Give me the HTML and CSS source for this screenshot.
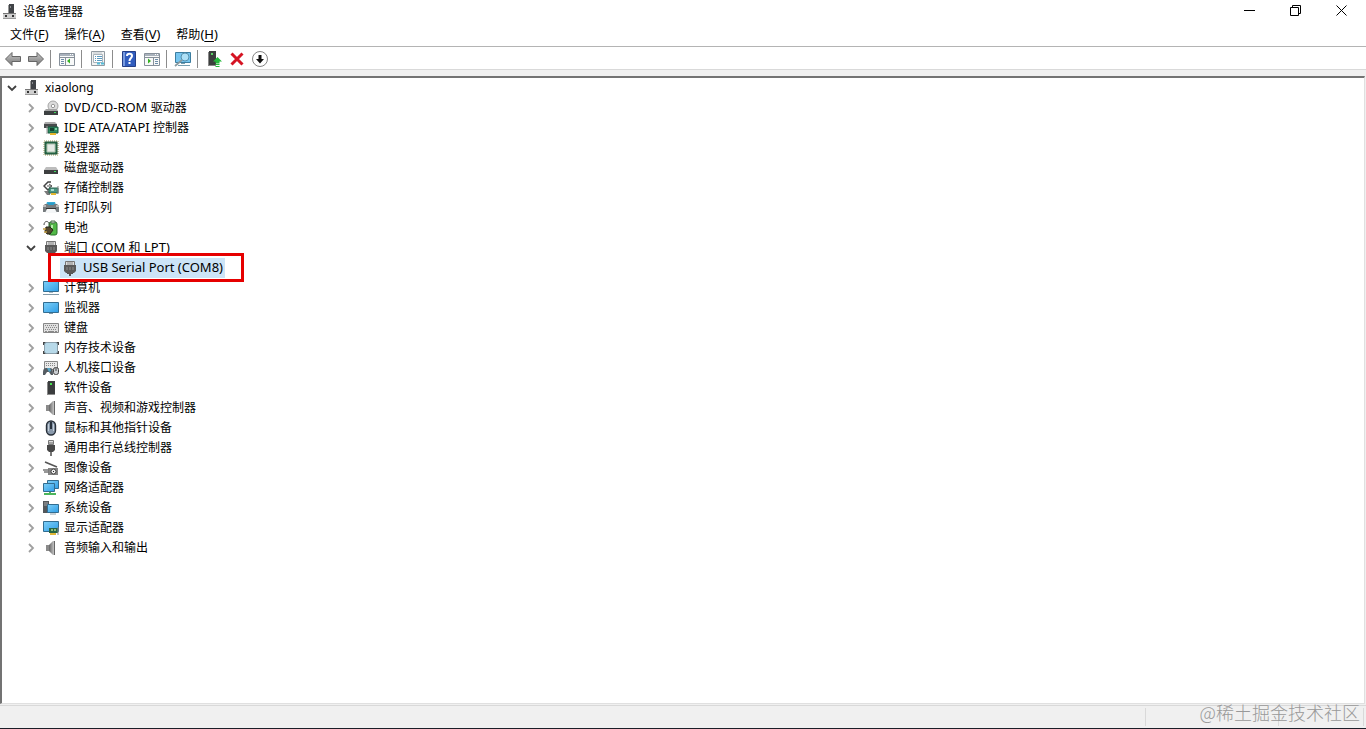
FILE: index.html
```html
<!DOCTYPE html>
<html lang="zh-CN">
<head>
    <meta charset="UTF-8">
    <meta name="viewport" content="width=device-width, initial-scale=1.0">
    <title>设备管理器</title>
    <link rel="stylesheet" href="styles.css">
</head>
<body>
    <!-- Icon sprite -->
    <svg class="sprite" aria-hidden="true">
        <defs>
            <linearGradient id="screen" x1="0" y1="0" x2="1" y2="1">
                <stop offset="0" stop-color="#7fd0f8"/><stop offset="1" stop-color="#2e9de6"/>
            </linearGradient>
            <linearGradient id="metal" x1="0" y1="0" x2="0" y2="1">
                <stop offset="0" stop-color="#c8c8c8"/><stop offset="1" stop-color="#777"/>
            </linearGradient>
            <linearGradient id="cone" x1="0" y1="0" x2="1" y2="0">
                <stop offset="0" stop-color="#666"/><stop offset="1" stop-color="#c4c4c4"/>
            </linearGradient>
        </defs>
        <symbol id="i-right" viewBox="0 0 16 16"><path d="M6 4l4 4-4 4" fill="none" stroke="#a0a0a0" stroke-width="1.8"/></symbol>
        <symbol id="i-down" viewBox="0 0 16 16"><path d="M4 6l4 4 4-4" fill="none" stroke="#404040" stroke-width="1.8"/></symbol>
        <symbol id="i-pc" viewBox="0 0 16 16">
            <path d="M7 0h5v9H7z" fill="#404347"/><path d="M6 1h1v8H6z" fill="#999"/><path d="M8 2h1v2H8z" fill="#8a8d90"/>
            <path d="M1 9h13v6H1z" fill="#cfcfcf"/><path d="M1 9h13v1H1z" fill="#777"/><path d="M1 14h13v1H1z" fill="#999"/><path d="M3 11h2v2H3zM10 11h2v2h-2z" fill="#333"/>
        </symbol>
        <symbol id="i-dvd" viewBox="0 0 16 16">
            <circle cx="10" cy="6" r="5" fill="#dcdcdc" stroke="#a5a5a5"/><circle cx="10" cy="6" r="1.7" fill="#fff" stroke="#999"/>
            <path d="M3 9h11l1 2H1z" fill="#a4a4a4"/><path d="M1 11h14v4H1z" fill="#3d4041"/><path d="M11 12h2v1h-2z" fill="#40d860"/>
        </symbol>
        <symbol id="i-ide" viewBox="0 0 16 16">
            <path d="M2 2h10l2 2H1z" fill="#aaa"/><path d="M1 4h13v4H1z" fill="#484b4c"/>
            <path d="M5 7h10v6H5z" fill="#2f8a62" stroke="#195b3f"/><path d="M7 8h4v3H7z" fill="#14422f"/><path d="M12 8h2v2h-2z" fill="#7ad4a4"/><path d="M7 13h6v2H7z" fill="#e4b52c"/><path d="M4 6v8" stroke="#999"/>
        </symbol>
        <symbol id="i-cpu" viewBox="0 0 16 16">
            <path d="M1 1h14v14H1z" fill="none" stroke="#9a9b58" stroke-dasharray="1 1"/><path d="M2 2h12v12H2z" fill="#2f7250" stroke="#1d5134"/><path d="M4 4h8v8H4z" fill="#e6ebe5" stroke="#aebfae"/>
        </symbol>
        <symbol id="i-disk" viewBox="0 0 16 16">
            <path d="M3 7h10l2 3H1z" fill="#bdbdbd"/><path d="M1 10h14v4H1z" fill="#3d3f40"/><path d="M11 11h2v1h-2z" fill="#40e060"/>
        </symbol>
        <symbol id="i-storage" viewBox="0 0 16 16">
            <path d="M8 2H5L1 6l4 4 3-2" fill="none" stroke="#444" stroke-width="1.5"/><path d="M4 6h5M6 4l3 2-3 2" fill="none" stroke="#555"/>
            <path d="M1 11h6v4H4z" fill="#7a7a7a"/><path d="M6 8h9v5H6z" fill="#4c9682" stroke="#286350"/><path d="M8 9h3v2H8z" fill="#a6d8cd"/><path d="M8 13h5v2H8z" fill="#e2b62f"/><path d="M15 6v8" stroke="#888"/>
        </symbol>
        <symbol id="i-printer" viewBox="0 0 16 16">
            <path d="M4 2h8l1 3H3z" fill="#35a9d4"/><path d="M0 6l2-2h12l2 2v6H0z" fill="#767b7e"/><path d="M5 3h6v2H5z" fill="#2b9cc8"/><path d="M0 5h3v2H0zM13 5h3v2h-3z" fill="#bbb"/><path d="M3 8h10v1H3z" fill="#333"/><path d="M4 9h8l2 4H2z" fill="#f5f7f8"/>
        </symbol>
        <symbol id="i-battery" viewBox="0 0 16 16">
            <rect x="6" y="2" width="8" height="13" rx="2" fill="#52b947" stroke="#2b722b"/><path d="M8 1h4v2H8z" fill="#d0dfd0" stroke="#537153"/><path d="M8 5h2v3H8z" fill="#b5edaa"/>
            <path d="M1 5c0-5 6-5 6 2" fill="none" stroke="#444"/><path d="M3 7h4l3 3-3 4H4l-2-3z" fill="#54482f" stroke="#27241a"/><path d="M0 9h3M1 12h3" stroke="#c09c43" stroke-width="1.5"/>
        </symbol>
        <symbol id="i-port" viewBox="0 0 16 16">
            <path d="M3.500 1.500h9v4h-9z" fill="#dedede" stroke="#777"/><path d="M6 2v3M8 2v3M10 2v3" stroke="#888"/><path d="M2 5h12v6l-2 2H4l-2-2z" fill="#5a5a5a"/><path d="M5 7v3M8 7v3M11 7v3" stroke="#8c8c8c"/><path d="M5 13h6v1H5zM7 14h2v2H7z" fill="#555"/>
        </symbol>
        <symbol id="i-computer" viewBox="0 0 16 16">
            <path d="M.5 1.500h15v10H.5z" fill="url(#screen)" stroke="#326d91"/><path d="M6 12h4v1H6z" fill="#a9bac5"/><path d="M0 14.500h16" stroke="#8299a7"/>
        </symbol>
        <symbol id="i-monitor" viewBox="0 0 16 16">
            <path d="M.5 2.500h15v10H.5z" fill="url(#screen)" stroke="#326d91"/><path d="M6 13h4v1H6z" fill="#8299a7"/>
        </symbol>
        <symbol id="i-keyboard" viewBox="0 0 16 16">
            <path d="M.5 3.500h15v9H.5z" fill="#e0e0e0" stroke="#888"/><path d="M2 5.500h12M3 7.500h11M2 9.500h12" stroke="#888" stroke-dasharray="1 1"/><path d="M2 11.500h2M5 11.500h6M12 11.500h2" stroke="#888"/>
        </symbol>
        <symbol id="i-memory" viewBox="0 0 16 16">
            <path d="M0 2h4v12H0zM12 2h4v12h-4z" fill="#454545"/><path d="M0 5h16v6H0z" fill="#fff"/><rect x="1.500" y="2.500" width="13" height="11" rx="2" fill="#b7d9e9" stroke="#8ba0ac"/>
        </symbol>
        <symbol id="i-hid" viewBox="0 0 16 16">
            <path d="M1.500 1.500h13v8h-13z" fill="#e9e9e9" stroke="#888"/><path d="M3 3.500h10M3 5.500h10" stroke="#888" stroke-dasharray="1 1"/>
            <path d="M0 15c0-4 0-7 3-7h4c3 0 3 3 3 7H8l-2-3H4l-2 3z" fill="#555c62"/><path d="M4 8h3l1 3-2 1z" fill="#58a5c6"/><rect x="10.500" y="7.500" width="5" height="7" rx="2" fill="#c8ccd0" stroke="#444"/><path d="M13 8v3" stroke="#444"/>
        </symbol>
        <symbol id="i-software" viewBox="0 0 16 16"><path d="M5 1h7v14H5z" fill="#3b3d3e"/><path d="M4 2h1v13H4z" fill="#888"/><path d="M7 3h2v2H7z" fill="#49e250"/><path d="M4 14h8v1H4z" fill="#8d8d8d"/></symbol>
        <symbol id="i-speaker" viewBox="0 0 16 16"><path d="M3 5h3v6H3z" fill="#8a8a8a"/><path d="M6 5l4-4h1v14h-1l-4-4z" fill="url(#cone)"/><path d="M11.500 1v14" stroke="#666"/></symbol>
        <symbol id="i-mouse" viewBox="0 0 16 16"><rect x="3.500" y="1" width="9" height="14" rx="4.500" fill="#8999ab" stroke="#29313a" stroke-width="1.400"/><path d="M8 2v7" stroke="#28323d" stroke-width="2"/><path d="M5.500 4v7M10.500 4v7" stroke="#c4cfda"/></symbol>
        <symbol id="i-usb" viewBox="0 0 16 16"><path d="M5.500.5h5v4h-5z" fill="#ddd" stroke="#777"/><path d="M7 2v2M9 2v2" stroke="#666"/><path d="M4 5h8v5l-2 2H6l-2-2z" fill="#484848"/><path d="M7 12h2v4H7z" fill="#777"/></symbol>
        <symbol id="i-imaging" viewBox="0 0 16 16"><path d="M2 2l12 5" stroke="#555" stroke-width="1.600"/><path d="M5 8h10v7H5z" fill="#858585"/><path d="M0 10h6M1 12h5" stroke="#777" stroke-width="1.400"/><circle cx="10.500" cy="11.500" r="2.500" fill="#eee" stroke="#444"/><path d="M10 11.500h1" stroke="#222"/></symbol>
        <symbol id="i-network" viewBox="0 0 16 16"><path d="M4.500.5h11v8h-11z" fill="url(#screen)" stroke="#326d91"/><path d="M.5 3.500h11v8H.5z" fill="url(#screen)" stroke="#326d91"/><path d="M6 12h2v2H6zM1 13h12v2H1z" fill="#4bb55b"/></symbol>
        <symbol id="i-system" viewBox="0 0 16 16"><path d="M0 1h6v12H0z" fill="#53575a"/><path d="M1 3h4M1 5h4" stroke="#a5a8aa"/><path d="M4.500 4.500h11v8h-11z" fill="url(#screen)" stroke="#326d91"/><path d="M7 14h6" stroke="#8ba0ac"/></symbol>
        <symbol id="i-display" viewBox="0 0 16 16"><path d="M.5 1.500h15v10H.5z" fill="url(#screen)" stroke="#326d91"/><path d="M6 8h9v5H6z" fill="#276545"/><path d="M8 9h2v2H8zM11 9h2v2h-2z" fill="#8dbc77"/><path d="M7 13h6v2H7z" fill="#e1b736"/><path d="M15 7v8" stroke="#888"/></symbol>
    </svg>

    <header class="titlebar">
        <svg class="icon"><use href="#i-pc"/></svg>
        <h1>设备管理器</h1>
        <div class="window-buttons">
            <button aria-label="最小化"><svg class="glyph" viewBox="0 0 11 11"><path d="M0 5.500h11"/></svg></button>
            <button aria-label="还原"><svg class="glyph" viewBox="0 0 11 11"><path d="M.5 2.500h8v8h-8zM2.500 2.500v-2h8v8h-2"/></svg></button>
            <button aria-label="关闭"><svg class="glyph" viewBox="0 0 11 11"><path d="M.5.5l10 10M10.500.5l-10 10"/></svg></button>
        </div>
    </header>

    <nav class="menubar">
        <button>文件<span class="latin">(<u>F</u>)</span></button>
        <button>操作<span class="latin">(<u>A</u>)</span></button>
        <button>查看<span class="latin">(<u>V</u>)</span></button>
        <button>帮助<span class="latin">(<u>H</u>)</span></button>
    </nav>

    <div class="toolbar" role="toolbar">
        <button aria-label="后退"><svg class="icon" viewBox="0 0 16 16"><path d="M.5 8L7 1.500v4h8.500v5H7v4z" fill="url(#metal)" stroke="#666"/></svg></button>
        <button aria-label="前进"><svg class="icon" viewBox="0 0 16 16"><path d="M15.500 8L9 1.500v4H.5v5H9v4z" fill="url(#metal)" stroke="#666"/></svg></button>
        <span class="divider"></span>
        <button aria-label="显示/隐藏控制台树"><svg class="icon" viewBox="0 0 16 16"><path d="M.5 2.500h15v12H.5z" fill="#f8f9f9" stroke="#87909a"/><path d="M1 3h14v2H1z" fill="#a9b2bc"/><path d="M11 3.500h3" stroke="#fff" stroke-dasharray="1 1"/><path d="M1 6.500h14M6.500 7v7" stroke="#87909a"/><path d="M2 8.500h3M2 10.500h3M2 12.500h3" stroke="#6d8da8"/><path d="M11 7.500v5L8 10z" fill="#36b422"/></svg></button>
        <span class="divider"></span>
        <button aria-label="属性"><svg class="icon" viewBox="0 0 16 16"><path d="M1.500.5h13v14h-13z" fill="#f2f3f3" stroke="#929ba2"/><path d="M3.500 3.500h9v8h-9z" fill="#fff" stroke="#aab4bc"/><path d="M3 2h9" stroke="#bfc5ca"/><path d="M5 5.500h1M7 5.500h5M5 7.500h1M7 7.500h5M5 9.500h1M7 9.500h5" stroke="#5b9ac0"/><path d="M7 12.500h3M11 12.500h3" stroke="#54bddb" stroke-width="2"/></svg></button>
        <span class="divider"></span>
        <button aria-label="帮助"><svg class="icon" viewBox="0 0 16 16"><path d="M1.500.5h13v15h-13z" fill="#315dbe" stroke="#253f87"/><path d="M2 1h2v14H2z" fill="#779ade"/><path d="M6 5c0-3 5-3 5 0 0 2-2.500 2-2.500 5M8.500 11v2" fill="none" stroke="#fff" stroke-width="2"/></svg></button>
        <button aria-label="显示/隐藏操作窗格"><svg class="icon" viewBox="0 0 16 16"><path d="M.5 2.500h15v12H.5z" fill="#f8f9f9" stroke="#87909a"/><path d="M1 3h14v2H1z" fill="#a9b2bc"/><path d="M11 3.500h3" stroke="#fff" stroke-dasharray="1 1"/><path d="M1 6.500h14M9.500 7v7" stroke="#87909a"/><path d="M11 8.500h3M11 10.500h3M11 12.500h3" stroke="#6d8da8"/><path d="M4 7.500v5L7 10z" fill="#36b422"/></svg></button>
        <span class="divider"></span>
        <button aria-label="扫描检测硬件改动"><svg class="icon wide" viewBox="0 0 18 16"><path d="M1.500 1.500h15v10h-15z" fill="#76c5ef" stroke="#3c7d9f"/><path d="M4 14.500h12M7 12.500h4" stroke="#789eaf"/><circle cx="11" cy="6" r="4" fill="#bde6f7" fill-opacity=".8" stroke="#5591af"/><path d="M8 9l-7 6" stroke="#8b9a9f" stroke-width="1.700"/></svg></button>
        <span class="divider"></span>
        <button aria-label="更新驱动程序"><svg class="icon" viewBox="0 0 16 16"><path d="M3 0h7v14H3z" fill="#3b3e3d"/><path d="M2 1h1v13H2z" fill="#888"/><path d="M5 2h2v2H5z" fill="#5bd166"/><path d="M2 14h8v1H2z" fill="#888"/><path d="M11.500 6L16 10.500H13.500v2h-4v-2H7zM9.500 13h4v1h-4zM9.500 15h4v1h-4z" fill="#24b93b"/></svg></button>
        <button aria-label="卸载设备"><svg class="icon" viewBox="0 0 16 16"><path d="M2.500 2.500l11 11M13.500 2.500l-11 11" stroke="#d51423" stroke-width="3"/></svg></button>
        <button aria-label="禁用设备"><svg class="icon" viewBox="0 0 16 16"><circle cx="8" cy="8" r="7.500" fill="#fff" stroke="#666" stroke-width=".8"/><path d="M6.500 4h3v4H12l-4 4.500L4 8h2.500z" fill="#111"/></svg></button>
    </div>

    <main class="workspace">
        <ul class="tree">
            <li>
                <div class="node"><button class="toggle" aria-label="折叠"><svg><use href="#i-down"/></svg></button><svg class="icon"><use href="#i-pc"/></svg><span class="label">xiaolong</span></div>
                <ul>
                    <li><div class="node"><button class="toggle" aria-label="展开"><svg><use href="#i-right"/></svg></button><svg class="icon"><use href="#i-dvd"/></svg><span class="label"><span class="latin">DVD/CD-ROM </span>驱动器</span></div></li>
                    <li><div class="node"><button class="toggle" aria-label="展开"><svg><use href="#i-right"/></svg></button><svg class="icon"><use href="#i-ide"/></svg><span class="label"><span class="latin">IDE ATA/ATAPI </span>控制器</span></div></li>
                    <li><div class="node"><button class="toggle" aria-label="展开"><svg><use href="#i-right"/></svg></button><svg class="icon"><use href="#i-cpu"/></svg><span class="label">处理器</span></div></li>
                    <li><div class="node"><button class="toggle" aria-label="展开"><svg><use href="#i-right"/></svg></button><svg class="icon"><use href="#i-disk"/></svg><span class="label">磁盘驱动器</span></div></li>
                    <li><div class="node"><button class="toggle" aria-label="展开"><svg><use href="#i-right"/></svg></button><svg class="icon"><use href="#i-storage"/></svg><span class="label">存储控制器</span></div></li>
                    <li><div class="node"><button class="toggle" aria-label="展开"><svg><use href="#i-right"/></svg></button><svg class="icon"><use href="#i-printer"/></svg><span class="label">打印队列</span></div></li>
                    <li><div class="node"><button class="toggle" aria-label="展开"><svg><use href="#i-right"/></svg></button><svg class="icon"><use href="#i-battery"/></svg><span class="label">电池</span></div></li>
                    <li>
                        <div class="node"><button class="toggle" aria-label="折叠"><svg><use href="#i-down"/></svg></button><svg class="icon"><use href="#i-port"/></svg><span class="label">端口<span class="latin"> (COM </span>和<span class="latin"> LPT)</span></span></div>
                        <ul>
                            <li class="marked"><div class="node selected"><svg class="icon"><use href="#i-port"/></svg><span class="label"><span class="latin">USB Serial Port (COM8)</span></span></div></li>
                        </ul>
                    </li>
                    <li><div class="node"><button class="toggle" aria-label="展开"><svg><use href="#i-right"/></svg></button><svg class="icon"><use href="#i-computer"/></svg><span class="label">计算机</span></div></li>
                    <li><div class="node"><button class="toggle" aria-label="展开"><svg><use href="#i-right"/></svg></button><svg class="icon"><use href="#i-monitor"/></svg><span class="label">监视器</span></div></li>
                    <li><div class="node"><button class="toggle" aria-label="展开"><svg><use href="#i-right"/></svg></button><svg class="icon"><use href="#i-keyboard"/></svg><span class="label">键盘</span></div></li>
                    <li><div class="node"><button class="toggle" aria-label="展开"><svg><use href="#i-right"/></svg></button><svg class="icon"><use href="#i-memory"/></svg><span class="label">内存技术设备</span></div></li>
                    <li><div class="node"><button class="toggle" aria-label="展开"><svg><use href="#i-right"/></svg></button><svg class="icon"><use href="#i-hid"/></svg><span class="label">人机接口设备</span></div></li>
                    <li><div class="node"><button class="toggle" aria-label="展开"><svg><use href="#i-right"/></svg></button><svg class="icon"><use href="#i-software"/></svg><span class="label">软件设备</span></div></li>
                    <li><div class="node"><button class="toggle" aria-label="展开"><svg><use href="#i-right"/></svg></button><svg class="icon"><use href="#i-speaker"/></svg><span class="label">声音、视频和游戏控制器</span></div></li>
                    <li><div class="node"><button class="toggle" aria-label="展开"><svg><use href="#i-right"/></svg></button><svg class="icon"><use href="#i-mouse"/></svg><span class="label">鼠标和其他指针设备</span></div></li>
                    <li><div class="node"><button class="toggle" aria-label="展开"><svg><use href="#i-right"/></svg></button><svg class="icon"><use href="#i-usb"/></svg><span class="label">通用串行总线控制器</span></div></li>
                    <li><div class="node"><button class="toggle" aria-label="展开"><svg><use href="#i-right"/></svg></button><svg class="icon"><use href="#i-imaging"/></svg><span class="label">图像设备</span></div></li>
                    <li><div class="node"><button class="toggle" aria-label="展开"><svg><use href="#i-right"/></svg></button><svg class="icon"><use href="#i-network"/></svg><span class="label">网络适配器</span></div></li>
                    <li><div class="node"><button class="toggle" aria-label="展开"><svg><use href="#i-right"/></svg></button><svg class="icon"><use href="#i-system"/></svg><span class="label">系统设备</span></div></li>
                    <li><div class="node"><button class="toggle" aria-label="展开"><svg><use href="#i-right"/></svg></button><svg class="icon"><use href="#i-display"/></svg><span class="label">显示适配器</span></div></li>
                    <li><div class="node"><button class="toggle" aria-label="展开"><svg><use href="#i-right"/></svg></button><svg class="icon"><use href="#i-speaker"/></svg><span class="label">音频输入和输出</span></div></li>
                </ul>
            </li>
        </ul>
    </main>

    <footer class="statusbar">
        <span class="cell grow"></span>
        <span class="cell"></span>
        <span class="cell small"></span>
        <span class="watermark">@稀土掘金技术社区</span>
    </footer>
</body>
</html>
```

FILE: styles.css
```css
:root {
    --text: #000;
    --face: #f0f0f0;
    --line: #d9d9d9;
    --mark: #e60000;
}
* {
    box-sizing: border-box;
}
body {
    font-family: "Noto Sans", "Noto Sans CJK SC", sans-serif;
    font-size: 12px;
    line-height: 20px;
    color: var(--text);
    background: #fff;
    margin: 0;
    height: 100vh;
    display: flex;
    flex-direction: column;
}
button {
    font: inherit;
    color: inherit;
    background: none;
    border: none;
    padding: 0;
}
ul {
    list-style: none;
    margin: 0;
    padding: 0;
}
.latin {
    font-size: 13px;
    line-height: 1;
    white-space: pre;
}
.sprite {
    position: absolute;
    width: 0;
    height: 0;
}
.icon {
    width: 16px;
    height: 16px;
    flex: none;
    display: block;
}
.icon.wide {
    width: 18px;
}

/* Title bar */
.titlebar {
    display: flex;
    align-items: center;
    gap: 5px;
    height: 23px;
    padding: 0 2px;
}
.titlebar h1 {
    font-size: 12px;
    font-weight: 400;
    margin: 0;
}
.window-buttons {
    display: flex;
    align-self: flex-start;
    margin-left: auto;
}
.window-buttons button {
    width: 46px;
    height: 21px;
    display: flex;
    align-items: center;
    justify-content: center;
}
.glyph {
    width: 11px;
    height: 11px;
    fill: none;
    stroke: #000;
}

/* Menu */
.menubar {
    display: flex;
    height: 24px;
    padding: 0 2px;
    border-bottom: 1px solid #b4b4b4;
}
.menubar button {
    padding: 0 8px;
}
.menubar u {
    text-underline-offset: 2px;
}

/* Toolbar */
.toolbar {
    display: flex;
    align-items: center;
    height: 23px;
    padding: 1px 1px 0;
    border-bottom: 1px solid var(--line);
}
.toolbar button {
    width: 23px;
    height: 22px;
    display: flex;
    align-items: center;
    justify-content: center;
}
.divider {
    width: 1px;
    height: 18px;
    margin: 0 4px 0 3px;
    background: #8c8c8c;
}

/* Device tree */
.workspace {
    flex: 1;
    display: flex;
    min-height: 0;
    padding: 6px 1px 1px 0;
    background: var(--face);
}
.workspace > .tree {
    flex: 1;
    padding-left: 2px;
    background: #fff;
    border-style: solid;
    border-width: 2px 1px 1px 2px;
    border-color: #737373 #e0e0e0 #e0e0e0 #737373;
}
.tree ul {
    padding-left: 19px;
}
.node {
    display: flex;
    align-items: center;
    height: 20px;
}
.toggle {
    width: 16px;
    height: 16px;
    margin-right: 4px;
}
.toggle svg {
    display: block;
    width: 16px;
    height: 16px;
}
.label {
    padding: 0 2px 0 5px;
    white-space: nowrap;
}
.selected {
    width: max-content;
    padding-left: 2px;
    margin-left: 18px;
    background: #cce4f7;
}
.marked {
    position: relative;
    width: max-content;
}
.marked::after {
    content: "";
    position: absolute;
    inset: -5px -19px -4px 6px;
    border: 3px solid var(--mark);
}

/* Status bar */
.statusbar {
    position: relative;
    display: flex;
    height: 24px;
    padding: 2px 0;
    background: var(--face);
    border-top: 1px solid var(--line);
    border-bottom: 1px solid #1b1e28;
}
.cell {
    width: 133px;
    border-right: 1px solid var(--line);
}
.cell.grow {
    flex: 1;
}
.cell.small {
    width: 85px;
    margin-right: 2px;
}
.watermark {
    position: absolute;
    right: 6px;
    bottom: 6px;
    font-family: "Noto Sans CJK SC", sans-serif;
    font-size: 18px;
    font-weight: 300;
    color: #999;
}
```
